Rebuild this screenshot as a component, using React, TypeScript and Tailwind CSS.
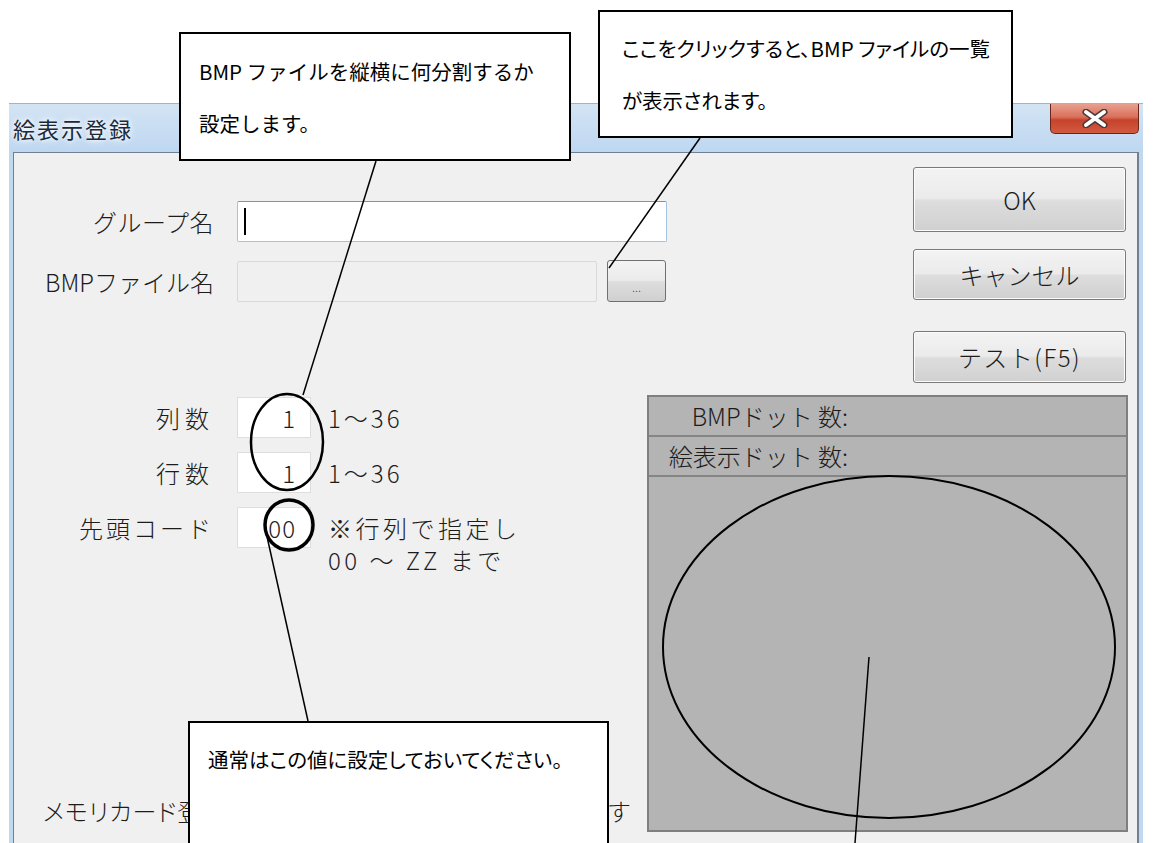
const dlgFont = "font-['Noto_Sans_CJK_JP','Noto_Sans',sans-serif]";

const Win7Button = ({ label, className }: { label: string; className: string }) => (
  <div
    className={`flex items-center justify-center rounded-[3px] border border-[#7a7a7a] bg-[linear-gradient(#f3f3f3_0%,#ebebeb_48%,#dddddd_52%,#d0d0d0_100%)] text-[24px] text-[#1c1c1c] shadow-[inset_0_0_0_1px_#fbfbfb] ${className}`}
  >
    {label}
  </div>
);

const NumField = ({ value }: { value: string }) => (
  <div className="ml-[23px] flex h-[41px] w-[74px] items-center justify-end border border-[#dedede] bg-white pr-[14px] text-[24px] leading-none tracking-[1px] text-[#1c1c1c]">
    {value}
  </div>
);

// labels are right aligned at x≈214
const Label = ({ text, track }: { text: string; track: string }) => (
  <div className={`w-[200px] text-right text-[24px] leading-[41px] text-[#1c1c1c] ${track}`}>{text}</div>
);

const Callout = ({ lines, className }: { lines: string[]; className: string }) => (
  <div className={`absolute border-2 border-black bg-white text-[20.5px] leading-[52px] text-black ${className}`}>
    {lines.map((l) => (
      <p key={l}>{l}</p>
    ))}
  </div>
);

export default function App() {
  return (
    <div className={`relative h-[843px] w-[1162px] overflow-hidden bg-white ${dlgFont}`}>
      {/* dialog window */}
      <div className="absolute left-[9px] top-[103px] flex h-[740px] w-[1134px] flex-col bg-[#c0d8f0]">
        <div className="relative flex h-[49px] items-center border-t border-[#9fb4c9] bg-[linear-gradient(#d3e4f4,#bed7f1)] pl-[4px]">
          <span className="text-[22px] tracking-[2px] text-[#1b2a3a] [text-shadow:0_0_8px_#fff,0_0_4px_#fff]">絵表示登録</span>
          <div className="absolute right-[4px] top-0 flex h-[30px] w-[89px] items-center justify-center rounded-b-[5px] border border-t-0 border-[#6b261c] bg-[linear-gradient(#e8a090_0%,#d9705a_45%,#c6432b_55%,#d15a40_100%)]">
            <svg width="26" height="19" viewBox="0 0 26 19">
              <path d="M4 3 L22 16 M22 3 L4 16" stroke="#4a3a38" strokeWidth="7" strokeLinecap="round" />
              <path d="M4 3 L22 16 M22 3 L4 16" stroke="#ffffff" strokeWidth="4" strokeLinecap="round" />
            </svg>
          </div>
        </div>

        <div className="mx-[4px] flex flex-1 flex-col border-l border-r-2 border-t border-[#6f8091] bg-[#f0f0f0] font-light">
          {/* upper section */}
          <div className="flex justify-between">
            <div className="flex flex-col gap-[18px] pt-[48px]">
              <div className="flex items-center">
                <Label text="グループ名" track="tracking-[0.5px]" />
                <div className="ml-[23px] flex h-[41px] w-[430px] items-center rounded-[2px] border border-[#a4c2e2] border-t-[#7396bb] bg-white pl-[6px]">
                  <div className="h-[27px] w-[2px] bg-black" />
                </div>
              </div>
              <div className="flex items-center">
                <Label text="BMPファイル名" track="tracking-[0px]" />
                <div className="ml-[23px] h-[41px] w-[360px] rounded-[2px] border border-[#d9d9d9] bg-[#f0f0f0]" />
                <div className="ml-[10px] flex h-[42px] w-[59px] items-end justify-center rounded-[3px] border border-[#707070] bg-[linear-gradient(#f3f3f3_0%,#ebebeb_48%,#dddddd_52%,#d0d0d0_100%)] pb-[8px] text-[12px] leading-none text-[#333]">
                  ...
                </div>
              </div>
            </div>
            <div className="mr-[11px] flex w-[213px] flex-col pt-[14px]">
              <Win7Button label="OK" className="h-[65px]" />
              <Win7Button label="キャンセル" className="mt-[17px] h-[51px]" />
              <Win7Button label="テスト(F5)" className="mt-[31px] h-[52px] tracking-[1.5px]" />
            </div>
          </div>

          {/* lower section */}
          <div className="mt-[12px] flex">
            <div className="flex flex-1 flex-col pt-[2px]">
              <div className="flex items-center">
                <Label text="列数" track="tracking-[5px]" />
                <NumField value="1" />
                <span className="ml-[17px] text-[24px] tracking-[3px] text-[#1c1c1c]">1～36</span>
              </div>
              <div className="mt-[14px] flex items-center">
                <Label text="行数" track="tracking-[5px]" />
                <NumField value="1" />
                <span className="ml-[17px] text-[24px] tracking-[3px] text-[#1c1c1c]">1～36</span>
              </div>
              <div className="mt-[14px] flex items-start">
                <Label text="先頭コード" track="tracking-[3px]" />
                <NumField value="00" />
                <div className="ml-[17px] mt-[5px] text-[24px] leading-[32px] tracking-[3.5px] text-[#1c1c1c]">
                  <p>※行列で指定し</p>
                  <p>00 ～ ZZ まで</p>
                </div>
              </div>
              <div className="mb-[6px] ml-[29px] mt-auto flex w-[588px] justify-between text-[24px] leading-[30px] tracking-[1px] text-[#1c1c1c] [font-feature-settings:'palt']">
                <span>メモリカード登録可能な絵表示の残り件数は０個で</span>
                <span>す</span>
              </div>
            </div>
            <div className="mr-[9px] flex h-[437px] w-[481px] flex-col border-2 border-[#7f7f7f] bg-[#b4b4b4] text-[24px] text-[#1c1c1c]">
              <div className="flex h-[40px] items-center border-b-2 border-[#858585]">
                <span className="w-[199px] text-right">BMPドット 数:</span>
              </div>
              <div className="flex h-[40px] items-center border-b-2 border-[#858585]">
                <span className="w-[199px] text-right">絵表示ドット 数:</span>
              </div>
              <div className="flex-1" />
            </div>
          </div>
        </div>
      </div>

      {/* annotation marks */}
      <svg className="pointer-events-none absolute left-0 top-0" width="1162" height="843" viewBox="0 0 1162 843" fill="none">
        <line x1="376" y1="161" x2="303" y2="395" stroke="#000" strokeWidth="1.5" />
        <ellipse cx="287" cy="442" rx="36" ry="48" stroke="#000" strokeWidth="2.5" />
        <ellipse cx="289" cy="525" rx="24" ry="25" stroke="#000" strokeWidth="3.5" />
        <line x1="266" y1="532" x2="308" y2="721" stroke="#000" strokeWidth="1.5" />
        <line x1="700" y1="138" x2="609" y2="268" stroke="#000" strokeWidth="1.5" />
        <ellipse cx="889" cy="647" rx="226" ry="171" stroke="#000" strokeWidth="2" />
        <line x1="869" y1="657" x2="855" y2="843" stroke="#000" strokeWidth="1.5" />
      </svg>

      <Callout
        className="left-[179px] top-[32px] h-[129px] w-[392px] pl-[18px] pt-[11px]"
        lines={["BMP ファイルを縦横に何分割するか", "設定します。"]}
      />
      <Callout
        className="left-[598px] top-[10px] h-[128px] w-[415px] pl-[22px] pt-[10px] [font-feature-settings:'palt']"
        lines={["ここをクリックすると、BMP ファイルの一覧", "が表示されます。"]}
      />
      <Callout
        className="left-[188px] top-[721px] h-[140px] w-[421px] pl-[18px] pt-[10px] [font-feature-settings:'palt']"
        lines={["通常はこの値に設定しておいてください。"]}
      />
    </div>
  );
}
